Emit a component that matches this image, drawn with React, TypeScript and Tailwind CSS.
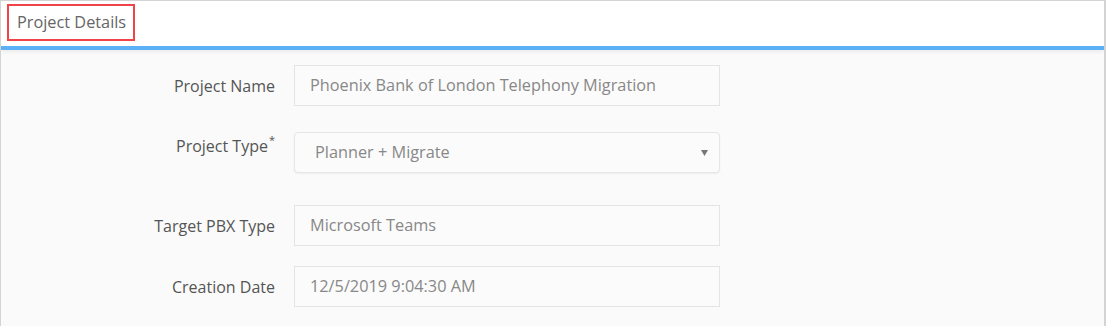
const rows = [
  { label: "Project Name", value: "Phoenix Bank of London Telephony Migration" },
];

function Field({ label, value, className }: { label: string; value: string; className?: string }) {
  return (
    <div className={"flex items-center " + (className ?? "")}>
      <div className="w-[274px] text-right text-[16px] text-[#555]">{label}</div>
      <div className="ml-[19px] flex h-[41px] w-[426px] items-center border border-[#e4e4e4] bg-[#fbfbfb] pl-[15px] text-[16.3px] text-[#888]">
        {value}
      </div>
    </div>
  );
}

export default function App() {
  return (
    <div
      className="h-[326px] w-[1106px] overflow-hidden border-l border-r-2 border-t border-[#d4d4d4] bg-[#fafafa]"
      style={{ fontFamily: '"Open Sans", "Noto Sans", sans-serif' }}
    >
      {/* Header */}
      <div className="flex h-[49px] items-start border-b-4 border-[#5cb0f6] bg-white pl-[6px] pt-[3px] shadow-[0_2px_4px_rgba(0,0,0,0.06)]">
        <span className="border-2 border-[#f0434a] pb-[6px] pl-[8px] pr-[7px] pt-[5px] text-[16.3px] leading-[22px] text-[#666]">
          Project Details
        </span>
      </div>

      {/* Form */}
      <div className="pt-[15px]">
        {rows.map((r) => (
          <Field key={r.label} label={r.label} value={r.value} />
        ))}

        <div className="mt-[26px] flex items-start">
          <div className="w-[274px] pt-[2px] text-right text-[16px] text-[#555]">
            Project Type
            <span className="relative -top-[8px] ml-[1px] text-[11px]">*</span>
          </div>
          <div className="ml-[19px] flex h-[41px] w-[426px] items-center justify-between rounded-[4px] border border-[#e6e6e6] bg-[#fbfbfb] pl-[20px] pr-[10px] text-[16.3px] text-[#888] shadow-[0_1px_2px_rgba(0,0,0,0.05)]">
            <span>Planner + Migrate</span>
            <svg width="7" height="6" viewBox="0 0 7 6" className="mr-[1px]">
              <path d="M0 0 L7 0 L3.5 6 Z" fill="#777" />
            </svg>
          </div>
        </div>

        <Field className="mt-[32px]" label="Target PBX Type" value="Microsoft Teams" />
        <Field className="mt-[20px]" label="Creation Date" value="12/5/2019 9:04:30 AM" />
      </div>
    </div>
  );
}
